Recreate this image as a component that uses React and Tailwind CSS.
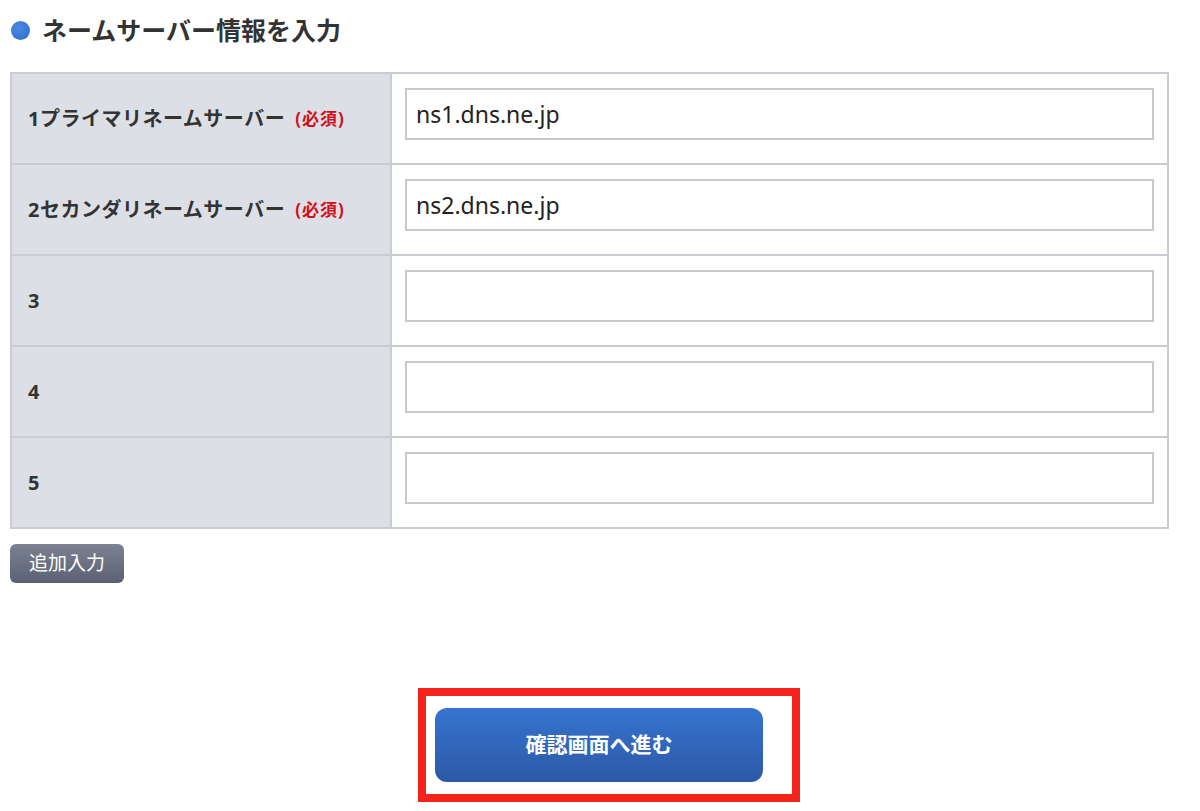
import { useState } from 'react'

const rows = [
  { label: '1プライマリネームサーバー', required: true, value: 'ns1.dns.ne.jp' },
  { label: '2セカンダリネームサーバー', required: true, value: 'ns2.dns.ne.jp' },
  { label: '3', value: '' },
  { label: '4', value: '' },
  { label: '5', value: '' },
]

export default function App() {
  const [values, setValues] = useState(rows.map((r) => r.value))

  return (
    <div className="min-h-[811px] bg-white px-[10px] text-[#333] [font-family:'Noto_Sans','Noto_Sans_CJK_JP',sans-serif]">
      <h2 className="flex h-[60px] items-center gap-[12px] pt-[1px] text-[25px] font-bold leading-none">
        <span className="ml-[1px] h-[19px] w-[19px] rounded-full bg-[radial-gradient(circle_at_40%_35%,#4a8ae0,#2f6cc8)]" />
        ネームサーバー情報を入力
      </h2>

      <div className="mt-[12px] w-[1159px] border-2 border-[#c9ccd0]">
        {rows.map((r, i) => (
          <div
            key={r.label}
            className={`flex ${i < rows.length - 1 ? 'h-[91px] border-b-2 border-[#c9ccd0]' : 'h-[89px]'}`}
          >
            <div className="flex w-[380px] items-center border-r-2 border-[#c9ccd0] bg-[#dce0e6] pl-[16px]">
              <span className="text-[20px] font-bold tracking-[0.5px]">{r.label}</span>
              {r.required && <span className="ml-[10px] text-[17px] font-bold tracking-[1px] text-[#d0101b]">(必須)</span>}
            </div>
            <div className="flex-1 px-[13px] pt-[14px]">
              <input
                className="h-[52px] w-full border-2 border-[#c6c8cc] bg-white px-[9px] text-[23px] text-[#222] outline-none"
                value={values[i]}
                onChange={(e) => setValues(values.map((v, j) => (j === i ? e.target.value : v)))}
              />
            </div>
          </div>
        ))}
      </div>

      <button className="mt-[15px] flex h-[39px] w-[114px] items-center justify-center rounded-[6px] bg-gradient-to-b from-[#7d8293] to-[#5b6172] text-[19px] text-white">
        追加入力
      </button>

      <div className="ml-[408px] mt-[105px] w-[382px] border-[8px] border-[#f5231c] pb-[12px] pl-[9px] pr-[29px] pt-[12px]">
        <button className="flex h-[74px] w-[328px] items-center justify-center rounded-[12px] bg-gradient-to-b from-[#3674d0] to-[#2c59a6] text-[21px] font-bold text-white">
          確認画面へ進む
        </button>
      </div>
    </div>
  )
}
